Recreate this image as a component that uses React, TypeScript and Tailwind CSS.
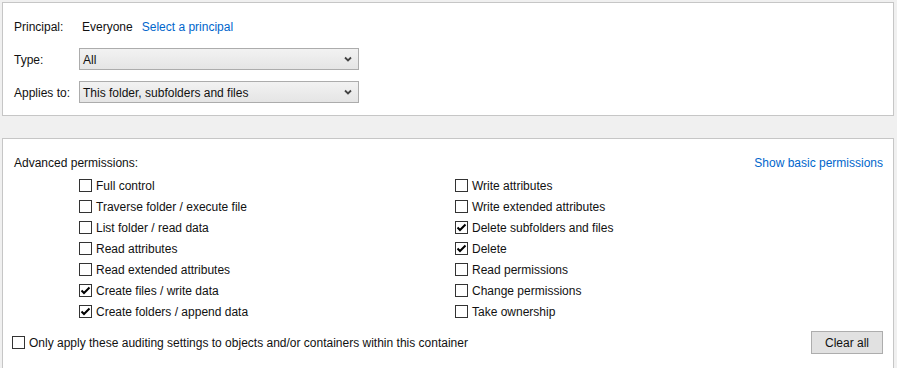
import type { ReactNode } from 'react'

const left = [
  { label: 'Full control', on: false },
  { label: 'Traverse folder / execute file', on: false },
  { label: 'List folder / read data', on: false },
  { label: 'Read attributes', on: false },
  { label: 'Read extended attributes', on: false },
  { label: 'Create files / write data', on: true },
  { label: 'Create folders / append data', on: true },
]

const right = [
  { label: 'Write attributes', on: false },
  { label: 'Write extended attributes', on: false },
  { label: 'Delete subfolders and files', on: true },
  { label: 'Delete', on: true },
  { label: 'Read permissions', on: false },
  { label: 'Change permissions', on: false },
  { label: 'Take ownership', on: false },
]

function Box({ on }: { on: boolean }) {
  return (
    <span className="flex h-[13px] w-[13px] shrink-0 items-center justify-center border border-[#333] bg-white">
      {on && (
        <svg width="11" height="11" viewBox="0 0 11 11">
          <path d="M1.5 5.5 4 8 9.5 2.5" fill="none" stroke="#000" strokeWidth="2" />
        </svg>
      )}
    </span>
  )
}

function Check({ label, on }: { label: string; on: boolean }) {
  return (
    <div className="flex h-[21px] items-center gap-[4px]">
      <Box on={on} />
      <span className="pt-[1px]">{label}</span>
    </div>
  )
}

function Select({ value }: { value: string }) {
  return (
    <div className="flex h-[22px] w-[280px] items-center justify-between border border-[#acacac] bg-gradient-to-b from-[#f2f2f2] to-[#e5e5e5] pl-[3px] pr-[6px]">
      <span className="pt-[1px]">{value}</span>
      <svg width="8" height="6" viewBox="0 0 8 6">
        <path d="M1 1.5 4 4.5 7 1.5" fill="none" stroke="#444" strokeWidth="1.8" />
      </svg>
    </div>
  )
}

function Row({ label, children }: { label: string; children: ReactNode }) {
  return (
    <div className="flex h-[22px] items-center">
      <span className="w-[65px] pt-[1px]">{label}</span>
      {children}
    </div>
  )
}

export default function App() {
  return (
    <div
      className="h-[368px] w-[897px] overflow-hidden bg-[#f0f0f0] pl-[2px] pt-[2px] text-[12px] text-[#111]"
      style={{ fontFamily: '"Liberation Sans", Arial, sans-serif' }}
    >
      <div className="flex h-[114px] w-[892px] flex-col gap-[11px] border border-[#c6c6c6] bg-white pl-[11px] pt-[12px]">
        <Row label="Principal:">
          <span className="pl-[3px] pt-[1px]">Everyone</span>
          <span className="ml-[9px] pt-[1px] text-[#0066cc]">Select a principal</span>
        </Row>
        <Row label="Type:">
          <Select value="All" />
        </Row>
        <Row label="Applies to:">
          <Select value="This folder, subfolders and files" />
        </Row>
      </div>

      <div className="mt-[22px] h-[240px] w-[892px] border border-[#c6c6c6] bg-white pl-[11px] pr-[10px] pt-[13px]">
        <div className="flex h-[21px] items-center justify-between pt-[1px]">
          <span>Advanced permissions:</span>
          <span className="text-[#0066cc]">Show basic permissions</span>
        </div>
        <div className="mt-[2px] grid grid-cols-[376px_1fr] pl-[65px]">
          <div className="flex flex-col">
            {left.map((c) => (
              <Check key={c.label} {...c} />
            ))}
          </div>
          <div className="flex flex-col">
            {right.map((c) => (
              <Check key={c.label} {...c} />
            ))}
          </div>
        </div>
        <div className="mt-[9px] flex h-[23px] items-center justify-between">
          <div className="-ml-[2px] flex items-center gap-[4px]">
            <Box on={false} />
            <span className="pt-[1px]">Only apply these auditing settings to objects and/or containers within this container</span>
          </div>
          <button className="h-[23px] w-[72px] border border-[#adadad] bg-[#e1e1e1] pt-[1px]">Clear all</button>
        </div>
      </div>
    </div>
  )
}
